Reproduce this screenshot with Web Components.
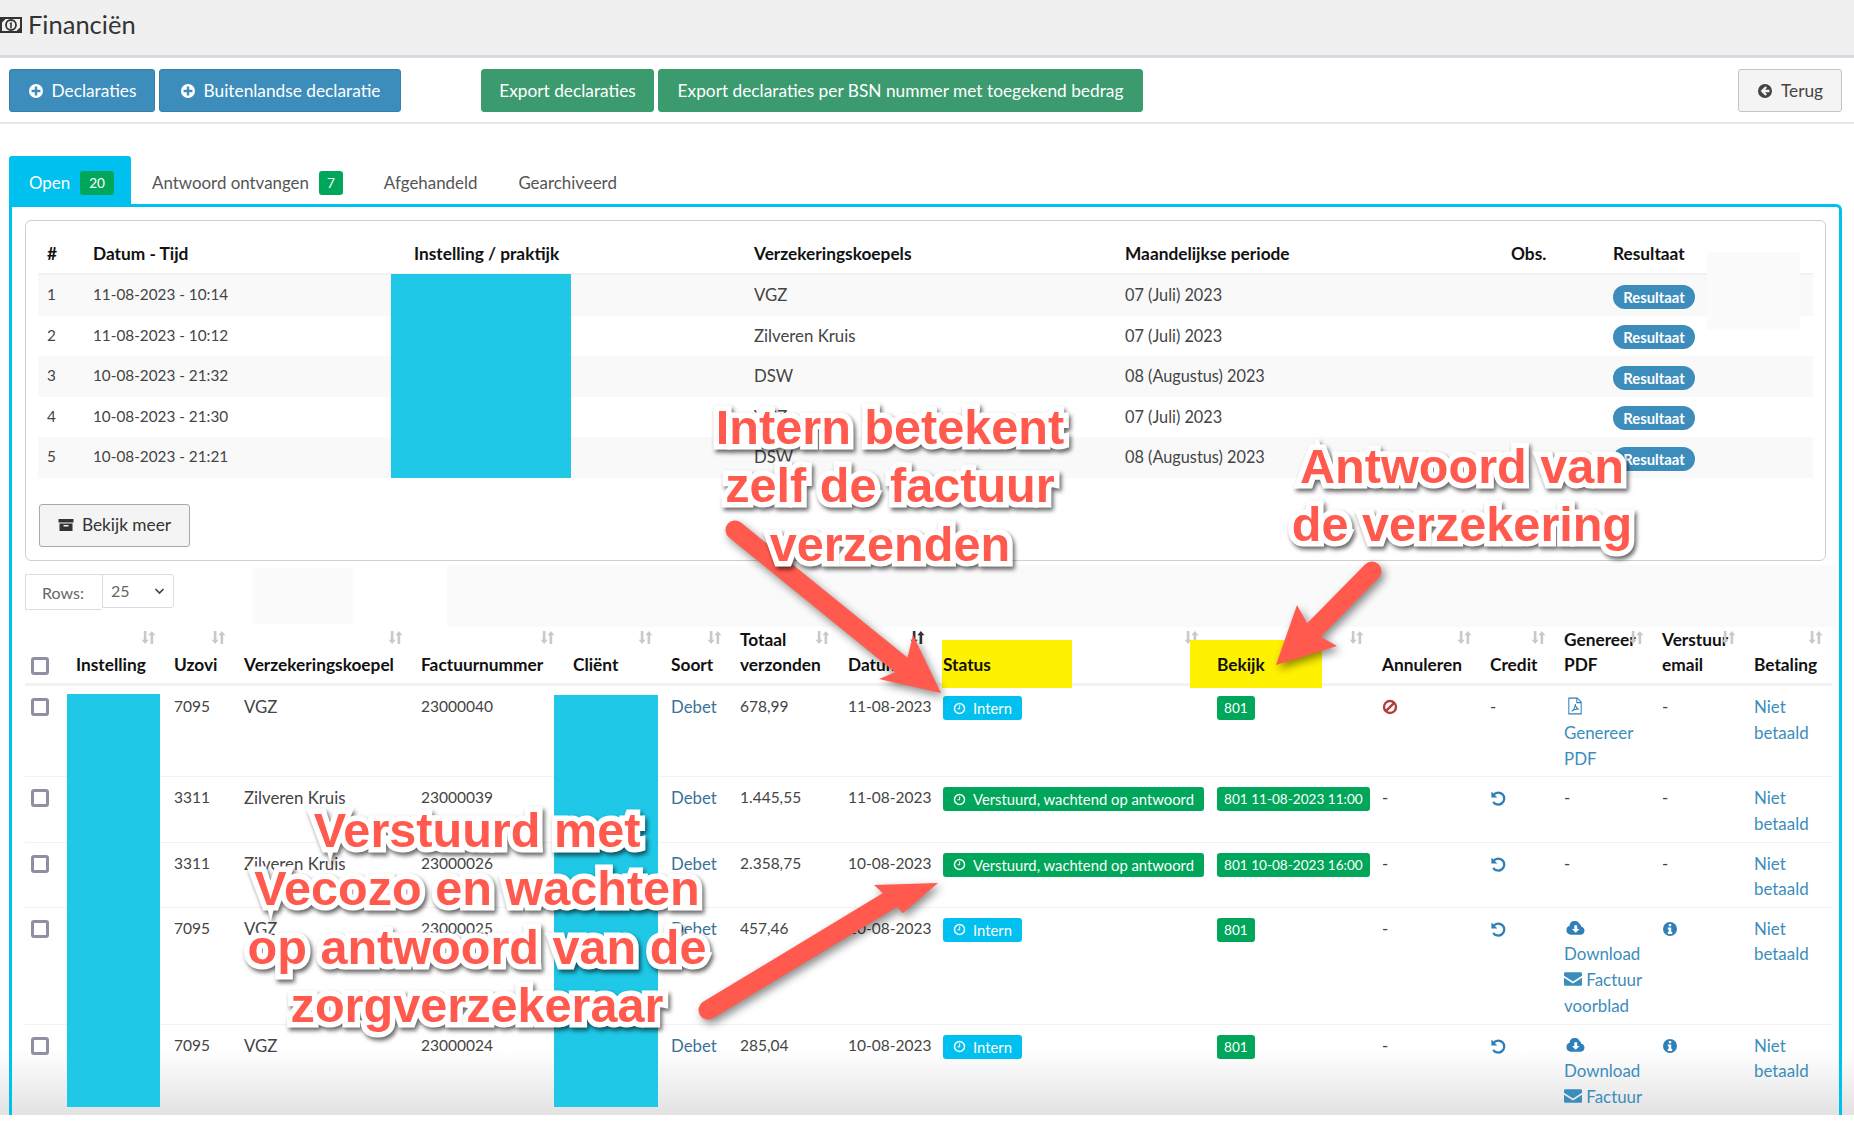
<!DOCTYPE html>
<html lang="nl"><head><meta charset="utf-8"><title>Financiën</title>
<style>
html,body{margin:0;padding:0;background:#fff}
body{width:1854px;height:1124px;overflow:hidden;font:16px/25.75px Lato,"Noto Sans",sans-serif;color:#444}
</style></head><body>
<fin-app></fin-app>
<script>
const ICONS={
plus:'<path fill-rule="evenodd" d="M8 1a7 7 0 1 0 0 14A7 7 0 0 0 8 1zM6.800 3.600h2.400v3.200h3.200v2.400H9.200v3.200H6.800V9.200H3.600V6.800h3.200z"/>',
back:'<path fill-rule="evenodd" d="M8 1a7 7 0 1 0 0 14A7 7 0 0 0 8 1zM8.400 3.200 10 4.800 8 6.800h4.400v2.400H8l2 2-1.600 1.600L3.600 8z"/>',
clock:'<circle cx="8" cy="8" r="6.200" fill="none" stroke="currentColor" stroke-width="1.800"/><path d="M8.800 4v5H5.500V7.800h2.100V4z"/>',
ban:'<circle cx="8" cy="8" r="6" fill="none" stroke="currentColor" stroke-width="2.400"/><path d="M3.800 12.200 12.200 3.800" stroke="currentColor" stroke-width="2.400"/>',
undo:'<path d="M3.700 4.600A6 6 0 1 1 3.200 11.800" fill="none" stroke="currentColor" stroke-width="2.300"/><path d="M1.400 1.600V7.600H7.400z"/>',
pdf:'<path d="M2.500 1H10l3.500 3.500V15h-11zM9.600 1.400V5h3.600M5 12.600c2-1 3-3.200 3.200-6.200C8.600 9 9.600 10.400 11.400 10.800 9.400 10.600 7 11.200 5 12.600z" fill="none" stroke="currentColor" stroke-width=".9"/>',
cloud:'<path fill-rule="evenodd" d="M4 14a3.800 3.800 0 0 1-1-7.400A3.800 3.800 0 0 1 7 2.600a4 4 0 0 1 4.400 2.400 2.700 2.700 0 0 1 1.500 2.300A3.400 3.400 0 0 1 12.500 14zM7 6v3.200H5l3.200 3.200 3.200-3.200h-2V6z"/>',
mail:'<path d="M0 5l8 5.200L16 5V3.400C16 2.600 15.500 2 14.800 2H1.200C.5 2 0 2.600 0 3.400zM0 6.800v6C0 13.500.5 14 1.200 14h13.600c.7 0 1.200-.5 1.200-1.200v-6l-8 5.200z"/>',
info:'<path fill-rule="evenodd" d="M8 1a7 7 0 1 0 0 14A7 7 0 0 0 8 1zM6.800 3h2.400v2.200H6.800zM5.800 6.400h3.400v4.400h1V13H5.800v-2.200h1V8.600h-1z"/>',
archive:'<path fill-rule="evenodd" d="M.5 2h15v3.500H.5zM1.500 6.500h13V14h-13zM5.500 8v1.600h5V8z"/>',
money:'<path fill-rule="evenodd" d="M0 1h22v16H0zM2 3v12h18V3z"/><circle cx="11" cy="9" r="5" fill="none" stroke="currentColor" stroke-width="1.800"/><path d="M9.400 7.400 11.800 5.800v6.400h-1.600V8.200z"/><path d="M2 3h3.500L2 6.500zM20 15h-3.500l3.500-3.500z"/>',
sort:'<path d="M3 1h2.800v9.500h2.400L4.400 15 .6 10.500H3zM10.200 15H13V5.500h2.400L11.600 1 7.800 5.500h2.400z"/>'
};
class FinIcon extends HTMLElement{connectedCallback(){
 const n=this.getAttribute('name'),vb=n==='money'?'0 0 22 18':'0 0 16 16';
 this.attachShadow({mode:'open'}).innerHTML=`<style>:host{display:inline-block;line-height:0;vertical-align:-2px;width:var(--s,16px);height:var(--h,var(--s,16px))}svg{width:100%;height:100%;fill:currentColor;display:block}</style><svg viewBox="${vb}" preserveAspectRatio="xMidYMid meet">${ICONS[n]}</svg>`;
}}
customElements.define('fin-icon',FinIcon);

class FinBtn extends HTMLElement{constructor(){super();this.attachShadow({mode:'open'}).innerHTML=`<style>
:host{display:inline-flex;align-items:center;justify-content:center;gap:8px;box-sizing:border-box;height:43px;padding:0 var(--px,12px);border-radius:3px;font-size:17.300px;white-space:nowrap;
background:var(--bg,#f4f4f4);color:var(--fg,#fff);border:1px solid var(--bd,#367fa9)}
</style><slot></slot>`}}
customElements.define('fin-btn',FinBtn);

class FinHeader extends HTMLElement{constructor(){super();this.attachShadow({mode:'open'}).innerHTML=`<style>
:host{display:flex;align-items:center;gap:6px;box-sizing:border-box;height:58px;background:#f0f0f0;border-bottom:3px solid #d6dbe1;font-size:25.500px;color:#333;padding-bottom:5px}
</style><fin-icon name="money" style="--s:22px;--h:18px"></fin-icon><slot></slot>`}}
customElements.define('fin-header',FinHeader);

class FinToolbar extends HTMLElement{constructor(){super();this.attachShadow({mode:'open'}).innerHTML=`<style>
:host{display:flex;box-sizing:border-box;height:66px;padding:11px 12px 0 9px;border-bottom:2px solid #e6e6e6}
.g{display:flex;gap:4px}.g2{margin-left:80px}.end{margin-left:auto}
</style><div class="g"><slot name="a"></slot></div><div class="g g2"><slot name="b"></slot></div><div class="g end"><slot name="c"></slot></div>`}}
customElements.define('fin-toolbar',FinToolbar);

class FinBadge extends HTMLElement{constructor(){super();this.attachShadow({mode:'open'}).innerHTML=`<style>
:host{display:inline-flex;align-items:center;justify-content:center;box-sizing:border-box;height:24px;padding:0 var(--p,7px);border-radius:3px;background:var(--bg,#00a65a);color:#fff;font-size:var(--f,13.600px);white-space:nowrap;gap:7px;line-height:24px;vertical-align:top;margin-top:var(--mt,0)}
</style><slot></slot>`}}
customElements.define('fin-badge',FinBadge);

class FinTabs extends HTMLElement{constructor(){super();this.attachShadow({mode:'open'}).innerHTML=`<style>
:host{display:block;margin:32px 12px 0 9px;position:relative;z-index:1}
.nav{display:flex;height:48px;align-items:stretch}
.t{display:flex;align-items:center;gap:10px;padding:6px 20px 0 21px;color:#555;font-size:16.900px}
.t.on{background:#00c0ef;color:#fff;border-radius:3px 3px 0 0;width:122px;box-sizing:border-box;padding-left:20px}
.b{border:3px solid #00c0ef;border-bottom:0;border-radius:0 6px 0 0;padding:13px 13px 0;height:940px;box-sizing:border-box}
</style><div class="nav">
<div class="t on">Open <fin-badge style="--p:9px">20</fin-badge></div>
<div class="t">Antwoord ontvangen <fin-badge style="--p:8px">7</fin-badge></div>
<div class="t">Afgehandeld</div><div class="t">Gearchiveerd</div>
</div><div class="b"><slot></slot></div>`}}
customElements.define('fin-tabs',FinTabs);

class FinResults extends HTMLElement{constructor(){super();
 const rows=[['1','11-08-2023 - 10:14','VGZ','07 (Juli) 2023'],['2','11-08-2023 - 10:12','Zilveren Kruis','07 (Juli) 2023'],['3','10-08-2023 - 21:32','DSW','08 (Augustus) 2023'],['4','10-08-2023 - 21:30','VGZ','07 (Juli) 2023'],['5','10-08-2023 - 21:21','DSW','08 (Augustus) 2023']];
 this.attachShadow({mode:'open'}).innerHTML=`<style>
:host{display:block;box-sizing:border-box;height:341px;border:1px solid #cfcfcf;border-radius:6px;padding:12px 12px 0;position:relative}
table{border-collapse:collapse;table-layout:fixed;width:1775px}
th{text-align:left;padding:2px 9px 0;height:38px;color:#111;font-weight:700;font-size:17.300px;border-bottom:2px solid #f1f1f1}
td{padding:0 9px;height:40.500px;font-size:15.300px;color:#444}
td.k{font-size:16.800px}td.p{font-size:16.300px}
tr:nth-child(odd) td{background:#f9f9f9}
.pill{display:inline-block;background:#3c8dbc;color:#fff;font-size:14.800px;font-weight:700;line-height:24px;border-radius:12px;width:82px;box-sizing:border-box;text-align:center;vertical-align:middle;margin-top:2px}
.red{position:absolute;left:365px;top:53px;width:180px;height:204px;background:#1ec8e6}
.patch{position:absolute;left:1681px;top:31px;width:93px;height:78px;background:#fbfbfb}
fin-btn{margin:26px 0 0 0}
.foot{padding-left:1px}
</style>
<table><colgroup><col style="width:46px"><col style="width:321px"><col style="width:340px"><col style="width:371px"><col style="width:386px"><col style="width:102px"><col style="width:209px"></colgroup>
<thead><tr><th>#</th><th>Datum - Tijd</th><th>Instelling / praktijk</th><th>Verzekeringskoepels</th><th>Maandelijkse periode</th><th>Obs.</th><th>Resultaat</th></tr></thead>
<tbody>${rows.map(r=>`<tr><td>${r[0]}</td><td>${r[1]}</td><td></td><td class="k">${r[2]}</td><td class="p">${r[3]}</td><td></td><td><span class="pill">Resultaat</span></td></tr>`).join('')}</tbody></table>
<div class="foot"><fin-btn style="--bg:#f4f4f4;--fg:#333;--bd:#a8a8a8;width:151px"><fin-icon name="archive"></fin-icon>Bekijk meer</fin-btn></div>
<div class="red"></div><div class="patch"></div>`}}
customElements.define('fin-results',FinResults);

class FinRows extends HTMLElement{constructor(){super();this.attachShadow({mode:'open'}).innerHTML=`<style>
:host{display:flex;margin-top:13px;height:36px;font-size:16px;color:#666;position:relative}
.l{box-sizing:border-box;width:77px;height:36px;border:1px solid #d9dbe6;border-right:0;padding-left:16px;line-height:36px}
.s{box-sizing:border-box;width:72px;height:34px;border:1px solid #d9dbe6;border-radius:0 3px 3px 0;padding:0 8px;line-height:30px;display:flex;justify-content:space-between;align-items:center}
svg{width:11px;height:8px;fill:none;stroke:#444;stroke-width:1.700}
.p{position:absolute;background:#fbfbfb;top:-6px;left:227px;width:102px;height:56px}
.q{position:absolute;background:#fafafa;top:-9px;left:422px;width:1389px;height:62px}
</style><div class="l">Rows:</div><div class="s">25<svg viewBox="0 0 11 8"><path d="M1.500 2 5.500 6 9.500 2"/></svg></div><div class="p"></div><div class="q"></div>`}}
customElements.define('fin-rows',FinRows);

class FinTable extends HTMLElement{constructor(){super();
 const cols=[42,98,70,177,152,98,69,108,95,274,165,108,74,98,92,87];
 const heads=['','Instelling','Uzovi','Verzekeringskoepel','Factuurnummer','Cliënt','Soort','Totaal verzonden','Datum','<span class=y>Status</span>','<span class=y2>Bekijk</span>','Annuleren','Credit','Genereer PDF','Verstuur email','Betaling'];
 const cb='<span class="cb"></span>';
 const ic=(n,x='')=>`<fin-icon name="${n}" ${x}></fin-icon>`;
 const intern=`<fin-badge style="--bg:#00c0ef;--p:10px;--f:14.800px;--mt:2px">${ic('clock','style="--s:13px"')}Intern</fin-badge>`;
 const sent=`<fin-badge style="--p:10px;--bg:#00a65a;--f:14.800px;--mt:2px">${ic('clock','style="--s:13px"')}Verstuurd, wachtend op antwoord</fin-badge>`;
 const niet='<a>Niet betaald</a>';
 const undo=`<span class="ub">${ic('undo')}</span>`;
 const dlHead=`<span class="ub">${ic('cloud','style="--s:19px"')}</span><br><a>Download</a><br><a>${ic('mail','style="--s:18px"')} Factuur`;
 const dl=dlHead+` voorblad</a>`;
 const dl5=dlHead+`</a>`;
 const info=`<span class="ib">${ic('info')}</span>`;
 const rows=[
 [92,'7095','VGZ','23000040','678,99','11-08-2023',intern,'801','<span class="bn">'+ic('ban')+'</span>','-',`<span class="ub">${ic('pdf','style="--s:18px"')}</span><br><a>Genereer PDF</a>`,'-'],
 [65.500,'3311','Zilveren Kruis','23000039','1.445,55','11-08-2023',sent,'801 11-08-2023 11:00','-',undo,'-','-'],
 [65,'3311','Zilveren Kruis','23000026','2.358,75','10-08-2023',sent,'801 10-08-2023 16:00','-',undo,'-','-'],
 [117,'7095','VGZ','23000025','457,46','10-08-2023',intern,'801','-',undo,dl,info],
 [117,'7095','VGZ','23000024','285,04','10-08-2023',intern,'801','-',undo,dl5,info]];
 this.attachShadow({mode:'open'}).innerHTML=`<style>
:host{display:block;position:relative;margin-top:16px;width:1807px}
table{border-collapse:collapse;table-layout:fixed;width:1807px}
th{position:relative;text-align:left;vertical-align:bottom;padding:0 9px 5px;color:#111;font-weight:700;font-size:17.300px;height:52px;border-bottom:3px solid #f2f2f2;line-height:25.750px}
th .so{position:absolute;right:9px;top:4px;color:#c9c9c9;--s:15px}
th.d .so{color:#333}
td{vertical-align:top;padding:8px 9px 3px;border-bottom:1px solid #f2f2f2;font-size:16.800px}
td.n{font-size:15.500px;white-space:nowrap}
a{color:#3c8dbc;font-size:16.900px}
.deb{color:#3a7299}
.cb{display:block;box-sizing:border-box;width:18px;height:18px;border:3px solid #8f8fa3;border-radius:3px;margin:4px 0 0 -3px}
th .cb{margin-bottom:3px}
.y,.y2{position:relative;z-index:0}
.y::before{content:"";position:absolute;z-index:-1;left:-1px;top:-14px;width:130px;height:48px;background:#fff200}
.y2::before{content:"";position:absolute;z-index:-1;left:-27px;top:-14px;width:132px;height:48px;background:#fff200}
.ub{color:#2f7fb8}.ib{color:#2f7fb8}.bn{color:#b23c3c}
td:nth-child(11) fin-badge{--mt:2px}
td:nth-child(14) .ub{margin-left:2px}
.r1{position:absolute;left:42px;top:68px;width:93px;height:413px;background:#1ec8e6}
.r2{position:absolute;left:529px;top:69px;width:104px;height:412px;background:#1ec8e6}
</style>
<table><colgroup>${cols.map(w=>`<col style="width:${w}px">`).join('')}</colgroup>
<thead><tr>${heads.map((h,i)=>`<th class="${i==8?'d':''}">${i?`<fin-icon class="so" name="sort"></fin-icon>`:''}${i?h:cb}</th>`).join('')}</tr></thead>
<tbody>${rows.map(r=>`<tr style="height:${r[0]}px"><td>${cb}</td><td></td><td class="n">${r[1]}</td><td>${r[2]}</td><td class="n">${r[3]}</td><td></td><td class="deb">Debet</td><td class="n">${r[4]}</td><td class="n">${r[5]}</td><td>${r[6]}</td><td><fin-badge>${r[7]}</fin-badge></td><td>${r[8]}</td><td>${r[9]}</td><td>${r[10]}</td><td>${r[11]}</td><td>${niet}</td></tr>`).join('')}</tbody></table>
<div class="r1"></div><div class="r2"></div>`}}
customElements.define('fin-table',FinTable);

class FinNote extends HTMLElement{constructor(){super();this.attachShadow({mode:'open'}).innerHTML=`<style>
:host{position:absolute;z-index:3;left:var(--x);top:var(--y);transform:translateX(-50%);text-align:center;white-space:pre;font:700 48.600px/58.300px "Liberation Sans",Arial,sans-serif;color:#ff5a4d;
-webkit-text-stroke:11px #fff;paint-order:stroke fill;filter:drop-shadow(2px 3px 2px rgba(0,0,0,.6))}
</style><slot></slot>`}}
customElements.define('fin-note',FinNote);

class FinArrows extends HTMLElement{constructor(){super();
 const a=(t,n,tip,b1,b2)=>`<path d="M${t} L${n}" stroke="#ff5a4d" stroke-width="19" stroke-linecap="round"/><polygon fill="#ff5a4d" points="${tip} ${b1} ${n} ${b2}"/>`;
 this.attachShadow({mode:'open'}).innerHTML=`<style>:host{position:absolute;z-index:3;left:0;top:0;width:1854px;height:1124px;pointer-events:none}svg{display:block;filter:drop-shadow(3px 4px 4px rgba(0,0,0,.45))}</style>
<svg width="1854" height="1124" viewBox="0 0 1854 1124">
${a('735,530','905,668','941,693','913,635','879,679')}
${a('1372,571','1312,632','1276,665','1297,605','1337,646')}
${a('708,1010','890,900','938,883','874,885','903,913')}
</svg>`}}
customElements.define('fin-arrows',FinArrows);

class FinApp extends HTMLElement{constructor(){super();this.attachShadow({mode:'open'}).innerHTML=`<style>
:host{display:block;position:relative;width:1854px;height:1124px;overflow:hidden}
.fade{position:absolute;z-index:0;left:0;right:0;top:1050px;height:65px;background:linear-gradient(rgba(229,229,229,0),rgba(226,226,226,1));pointer-events:none}
.under{position:absolute;z-index:2;left:0;right:0;top:1115px;height:9px;background:#fff}
</style>
<fin-header>Financiën</fin-header>
<fin-toolbar>
<fin-btn slot="a" style="--bg:#3c8dbc;width:146px"><fin-icon name="plus"></fin-icon>Declaraties</fin-btn>
<fin-btn slot="a" style="--bg:#3c8dbc;width:242px"><fin-icon name="plus"></fin-icon>Buitenlandse declaratie</fin-btn>
<fin-btn slot="b" style="--bg:#3c9a6f;--bd:#3c9a6f;width:173px">Export declaraties</fin-btn>
<fin-btn slot="b" style="--bg:#3c9a6f;--bd:#3c9a6f;width:485px">Export declaraties per BSN nummer met toegekend bedrag</fin-btn>
<fin-btn slot="c" style="--bg:#f4f4f4;--fg:#444;--bd:#c4c4c4;width:104px"><fin-icon name="back"></fin-icon>Terug</fin-btn>
</fin-toolbar>
<fin-tabs><fin-results></fin-results><fin-rows></fin-rows><fin-table></fin-table></fin-tabs>
<div class="fade"></div><div class="under"></div>
<fin-arrows></fin-arrows>
<fin-note style="--x:890px;--y:398px">Intern betekent
zelf de factuur
verzenden</fin-note>
<fin-note style="--x:1462px;--y:437px">Antwoord van
de verzekering</fin-note>
<fin-note style="--x:477px;--y:801px">Verstuurd met
Vecozo en wachten
op antwoord van de
zorgverzekeraar</fin-note>`}}
customElements.define('fin-app',FinApp);
</script>
</body></html>
